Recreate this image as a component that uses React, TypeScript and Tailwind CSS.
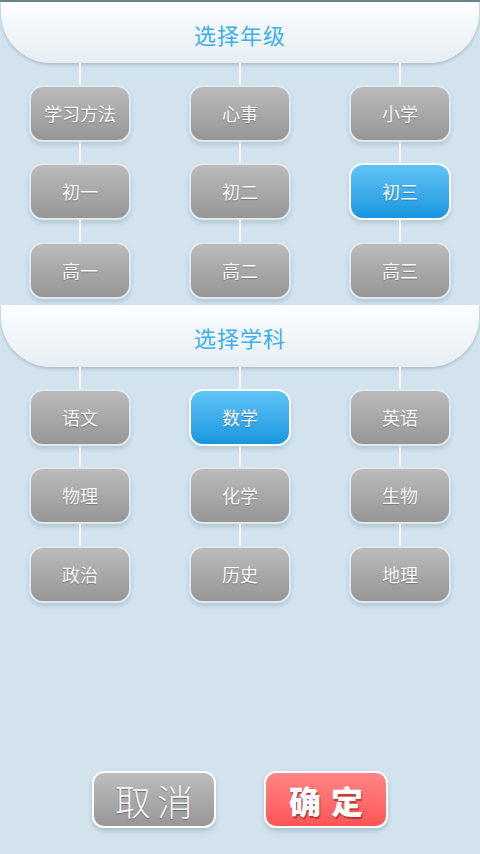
import React from "react";

const font = { fontFamily: '"Noto Sans CJK SC", "Noto Sans", sans-serif' };

const grades = [
  ["学习方法", "心事", "小学"],
  ["初一", "初二", "初三"],
  ["高一", "高二", "高三"],
];

const subjects = [
  ["语文", "数学", "英语"],
  ["物理", "化学", "生物"],
  ["政治", "历史", "地理"],
];

const lineHeights = ["h-[22px]", "h-[21px]", "h-[22px]"];

function Header({ title, tall }: { title: string; tall: boolean }) {
  return (
    <div
      className={
        (tall ? "h-[62px]" : "h-[61px]") +
        " mx-[1px] flex items-center justify-center rounded-b-[50px] bg-gradient-to-b from-[#fdfeff] to-[#e6eef3] shadow-[0_2px_3px_rgba(60,90,110,0.25)]"
      }
    >
      <span className="text-[22px] text-[#3cb0ea] tracking-[1px] pt-[3px]">{title}</span>
    </div>
  );
}

function Chip({ label, active }: { label: string; active: boolean }) {
  return (
    <div
      className={
        active
          ? "w-[102px] h-[57px] rounded-[14px] border-2 border-white bg-gradient-to-b from-[#5dc4f6] to-[#1496df] flex items-center justify-center shadow-[0_3px_4px_rgba(60,90,110,0.2)]"
          : "w-[102px] h-[57px] rounded-[14px] border-2 border-[#dfe8ee] bg-gradient-to-b from-[#bbbbbb] to-[#969696] flex items-center justify-center shadow-[0_3px_4px_rgba(60,90,110,0.2)]"
      }
    >
      <span className="text-[18px] text-[#f7f7f7] [text-shadow:0_1px_1px_rgba(0,0,0,0.25)]">{label}</span>
    </div>
  );
}

function Section({ title, rows, selected, tall }: { title: string; rows: string[][]; selected: string; tall: boolean }) {
  return (
    <div>
      <Header title={title} tall={tall} />
      <div className="grid grid-cols-3">
        {[0, 1, 2].map((c) => (
          <div key={c} className="flex flex-col items-center">
            {rows.map((row, r) => (
              <React.Fragment key={r}>
                <div className={"w-[2px] bg-[#f4f8fa] " + lineHeights[r]} />
                <Chip label={row[c]} active={row[c] === selected} />
              </React.Fragment>
            ))}
          </div>
        ))}
      </div>
    </div>
  );
}

export default function App() {
  return (
    <div style={font} className="w-[480px] h-[854px] bg-[#d2e3ee] border-t-2 border-[#6e818c] flex flex-col">
      <Section title="选择年级" rows={grades} selected="初三" tall={false} />
      <div className="h-[6px]" />
      <Section title="选择学科" rows={subjects} selected="数学" tall={true} />
      <div className="flex-1" />
      <div className="flex justify-center gap-[48px] pb-[26px]">
        <button className="w-[124px] h-[57px] rounded-[12px] border-2 border-white bg-gradient-to-b from-[#bdbdbd] to-[#979797] flex items-center justify-center shadow-[0_3px_4px_rgba(60,90,110,0.25)]">
          <span className="text-[36px] font-light text-[#f4f4f4] tracking-[6px] pl-[6px] [text-shadow:0_1px_1px_rgba(0,0,0,0.35)]">取消</span>
        </button>
        <button className="w-[124px] h-[57px] rounded-[12px] border-2 border-white bg-gradient-to-b from-[#ff8585] to-[#ff5457] flex items-center justify-center shadow-[0_3px_4px_rgba(60,90,110,0.25)]">
          <span className="text-[32px] font-black text-white tracking-[10px] pl-[10px] [text-shadow:1px_2px_1px_rgba(90,0,0,0.45)]">确定</span>
        </button>
      </div>
    </div>
  );
}
